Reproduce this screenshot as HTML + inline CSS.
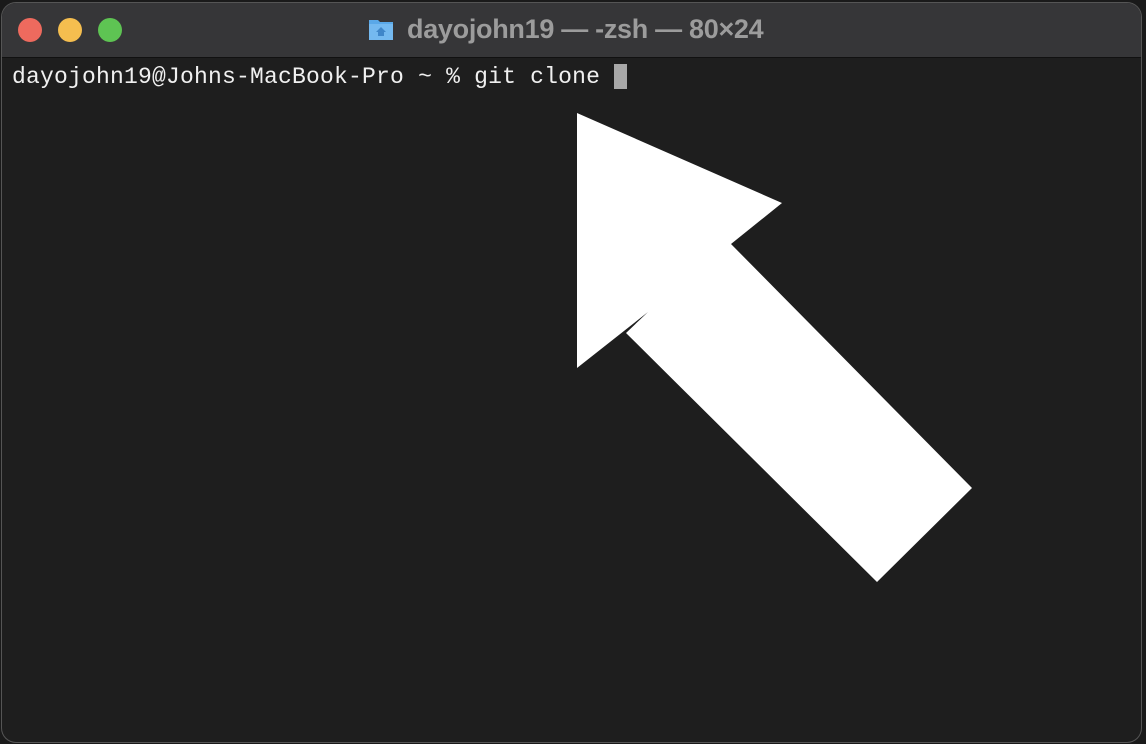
<!DOCTYPE html>
<html><head><meta charset="utf-8"><style>
html,body{margin:0;padding:0;width:1146px;height:744px;overflow:hidden;background:#1a1a1a;}
.win{position:absolute;left:2px;top:3px;width:1139px;height:739px;border-radius:14px;background:#1e1e1e;overflow:hidden;box-shadow:0 0 0 1px #555;}
.tb{position:absolute;left:0;top:0;width:100%;height:54px;background:#363638;border-bottom:1px solid #111;}
.dot{position:absolute;top:15px;width:24px;height:24px;border-radius:50%;}
.title{position:absolute;left:405px;top:11px;font:bold 27px "Liberation Sans",sans-serif;color:#9c9c9c;white-space:nowrap;letter-spacing:-0.3px;}
.txt{position:absolute;left:10px;top:60px;font:23px "Liberation Mono",monospace;letter-spacing:0.2px;color:#f0f0f0;white-space:pre;line-height:28px;}
.cur{position:absolute;left:612px;top:61px;width:13px;height:25px;background:#a8a8a8;}
</style></head><body>
<div class="win">
<div class="tb">
<div class="dot" style="left:16px;background:#ee6a5e"></div>
<div class="dot" style="left:56px;background:#f5be4f"></div>
<div class="dot" style="left:96px;background:#5ec453"></div>
<svg style="position:absolute;left:366px;top:13px" width="26" height="26" viewBox="0 0 26 26"><path d="M1 4h9l2 2h13v18H1z" fill="#5aa8e8"/><path d="M1 8h24v16H1z" fill="#74b9f0"/><path d="M13 11l-5 5h2v4h6v-4h2z" fill="#3f86c9"/></svg>
<div class="title">dayojohn19 — -zsh — 80×24</div>
</div>
<div class="txt">dayojohn19@Johns-MacBook-Pro ~ % git clone </div>
<div class="cur"></div>
</div>
<svg style="position:absolute;left:0;top:0" width="1146" height="744"><polygon points="577,113 782,203 731,244 972,488 877,582 626,333 648,312 577,368" fill="#fff"/></svg>
</body></html>
